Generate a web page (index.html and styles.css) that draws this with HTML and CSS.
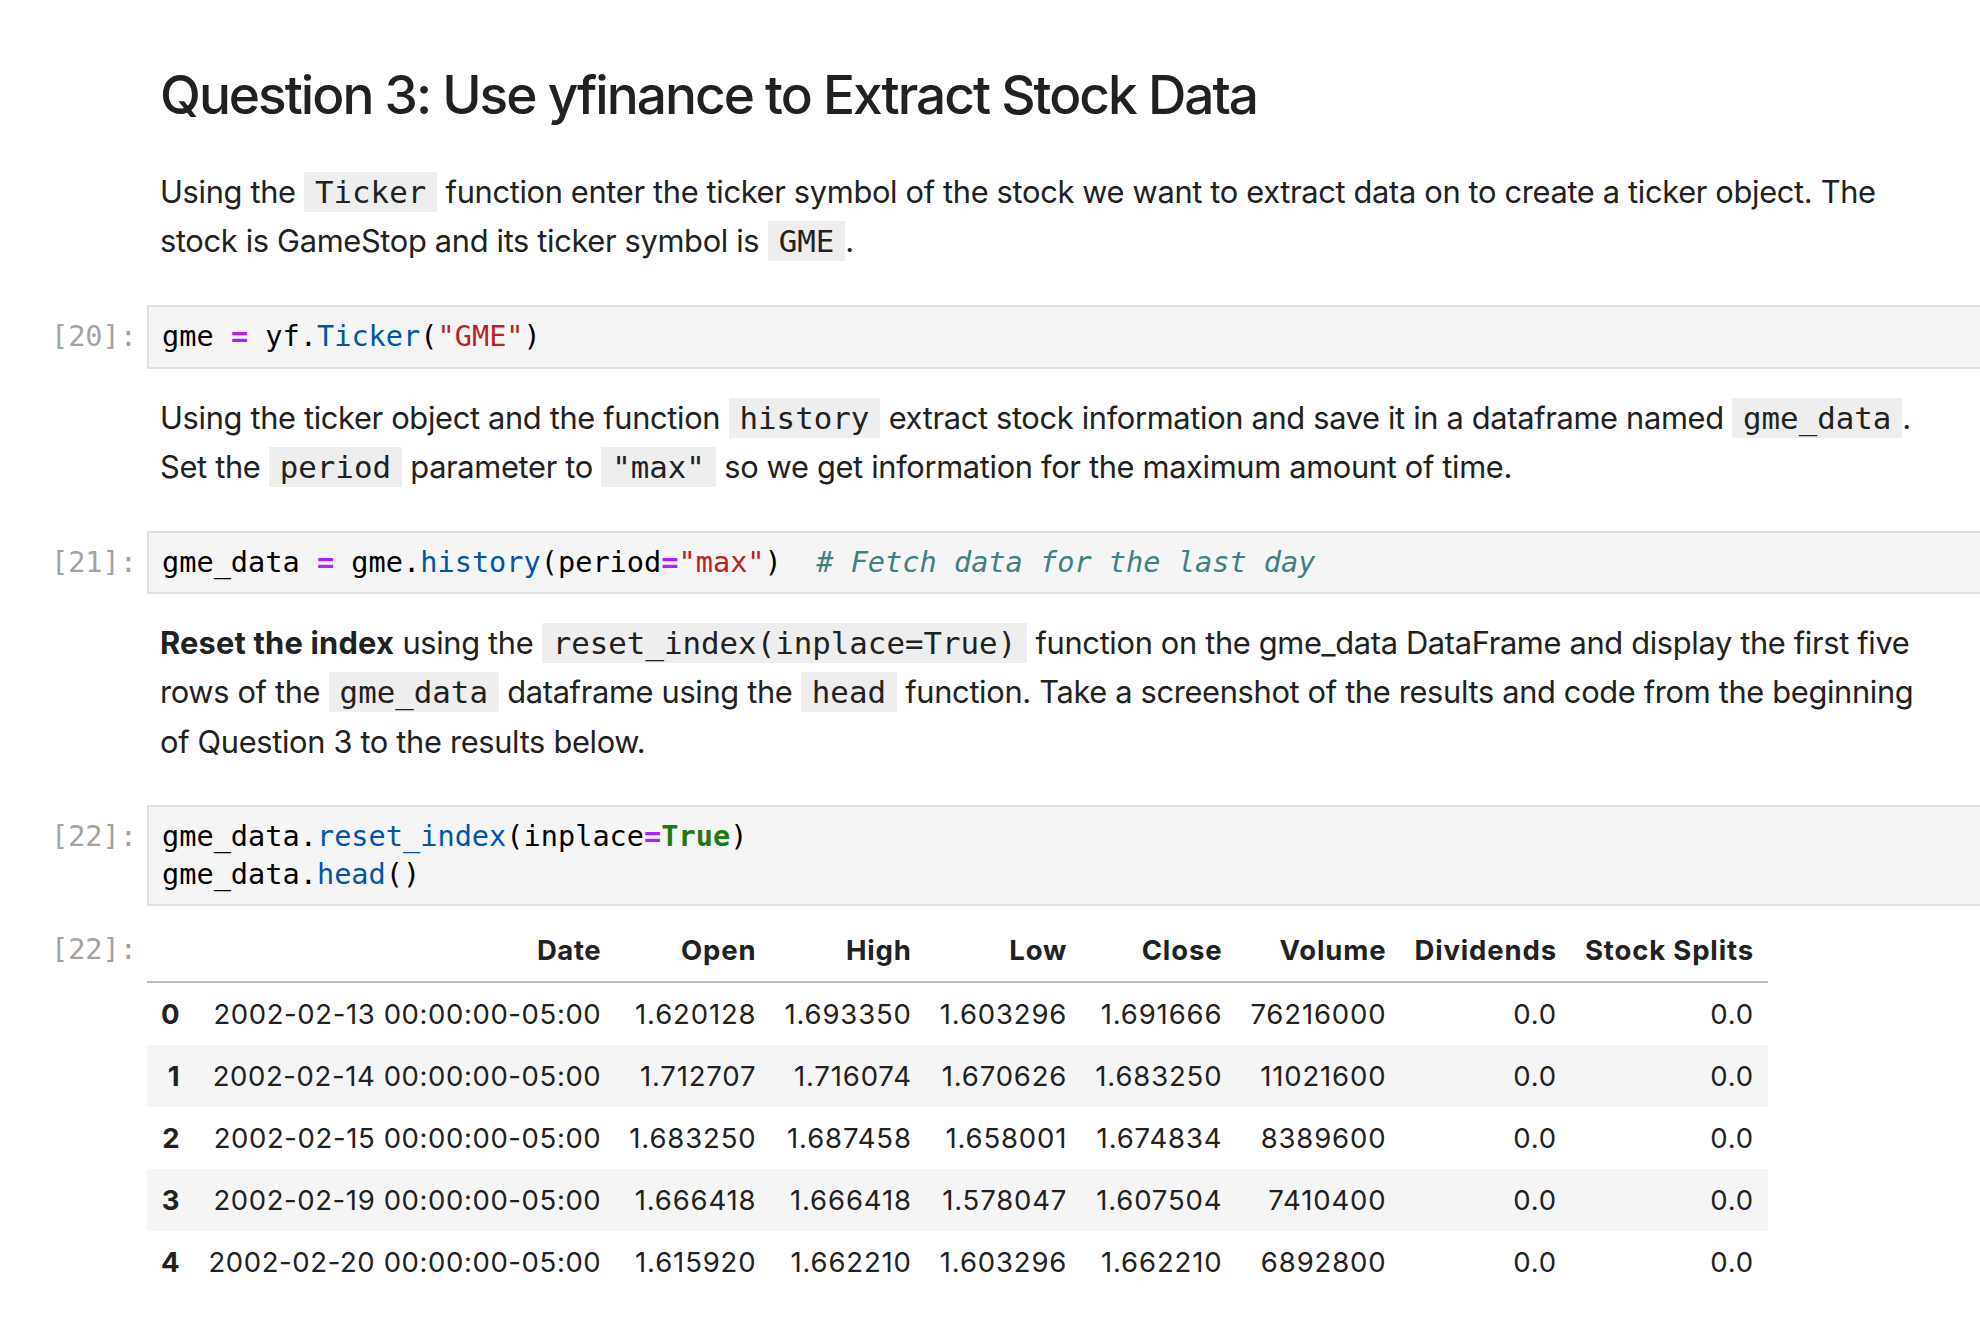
FILE: index.html
```html
<!DOCTYPE html>
<html lang="en">
<head>
<meta charset="utf-8">
<title>Question 3: Use yfinance to Extract Stock Data</title>
<link rel="stylesheet" href="styles.css">
</head>
<body>
<div class="notebook">
  <div class="cell md-cell">
    <div class="prompt"></div>
    <div class="md">
      <h2>Question 3: Use yfinance to Extract Stock Data</h2>
      <p>Using the <code>Ticker</code> function enter the ticker symbol of the stock we want to extract data on to create a ticker object. The stock is GameStop and its ticker symbol is <code>GME</code>.</p>
    </div>
  </div>

  <div class="cell code-cell">
    <div class="prompt">[20]:</div>
    <div class="editor"><pre>gme <span class="o">=</span> yf.<span class="p">Ticker</span>(<span class="s">"GME"</span>)</pre></div>
  </div>

  <div class="cell md-cell">
    <div class="prompt"></div>
    <div class="md">
      <p>Using the ticker object and the function <code>history</code> extract stock information and save it in a dataframe named <code>gme_data</code>. Set the <code>period</code> parameter to <code>"max"</code> so we get information for the maximum amount of time.</p>
    </div>
  </div>

  <div class="cell code-cell">
    <div class="prompt">[21]:</div>
    <div class="editor"><pre>gme_data <span class="o">=</span> gme.<span class="p">history</span>(period<span class="o">=</span><span class="s">"max"</span>)  <span class="c"># Fetch data for the last day</span></pre></div>
  </div>

  <div class="cell md-cell">
    <div class="prompt"></div>
    <div class="md">
      <p><strong>Reset the index</strong> using the <code>reset_index(inplace=True)</code> function on the gme_data DataFrame and display the first five rows of the <code>gme_data</code> dataframe using the <code>head</code> function. Take a screenshot of the results and code from the beginning of Question 3 to the results below.</p>
    </div>
  </div>

  <div class="cell code-cell">
    <div class="prompt">[22]:</div>
    <div class="editor"><pre>gme_data.<span class="p">reset_index</span>(inplace<span class="o">=</span><span class="k">True</span>)
gme_data.<span class="p">head</span>()</pre></div>
  </div>

  <div class="cell output-cell">
    <div class="prompt out-prompt">[22]:</div>
    <div class="output">
      <table class="dataframe">
        <thead>
          <tr><th></th><th class="date">Date</th><th>Open</th><th>High</th><th>Low</th><th>Close</th><th>Volume</th><th>Dividends</th><th>Stock Splits</th></tr>
        </thead>
        <tbody>
          <tr><th>0</th><td class="date">2002-02-13 00:00:00-05:00</td><td>1.620128</td><td>1.693350</td><td>1.603296</td><td>1.691666</td><td>76216000</td><td>0.0</td><td>0.0</td></tr>
          <tr><th>1</th><td class="date">2002-02-14 00:00:00-05:00</td><td>1.712707</td><td>1.716074</td><td>1.670626</td><td>1.683250</td><td>11021600</td><td>0.0</td><td>0.0</td></tr>
          <tr><th>2</th><td class="date">2002-02-15 00:00:00-05:00</td><td>1.683250</td><td>1.687458</td><td>1.658001</td><td>1.674834</td><td>8389600</td><td>0.0</td><td>0.0</td></tr>
          <tr><th>3</th><td class="date">2002-02-19 00:00:00-05:00</td><td>1.666418</td><td>1.666418</td><td>1.578047</td><td>1.607504</td><td>7410400</td><td>0.0</td><td>0.0</td></tr>
          <tr><th>4</th><td class="date">2002-02-20 00:00:00-05:00</td><td>1.615920</td><td>1.662210</td><td>1.603296</td><td>1.662210</td><td>6892800</td><td>0.0</td><td>0.0</td></tr>
        </tbody>
      </table>
    </div>
  </div>
</div>
</body>
</html>
```

FILE: styles.css
```css
html, body {
  margin: 0;
  padding: 0;
  background: #ffffff;
  overflow: hidden;
}

body {
  font-family: Inter, "Noto Sans", "Liberation Sans", sans-serif;
  color: #212121;
}

.notebook {
  padding-top: 63px;
}

.cell {
  display: flex;
}

.md-cell,
.output-cell {
  align-items: flex-start;
}

.code-cell {
  align-items: baseline;
}

.md-cell + .code-cell {
  margin-top: 39.4px;
}

.code-cell + .md-cell {
  margin-top: 24px;
}

.code-cell + .output-cell {
  margin-top: 12.7px;
}

.prompt {
  flex: 0 0 147px;
  box-sizing: border-box;
  padding-right: 10px;
  text-align: right;
  font-family: "DejaVu Sans Mono", "Liberation Mono", monospace;
  font-size: 28.6px;
  line-height: 37.4px;
  color: #a3a3a3;
}

.out-prompt {
  padding-top: 11.8px;
}

.md {
  flex: 1;
  min-width: 0;
  padding: 0 52px 0 13px;
}

.md h2 {
  margin: 0;
  font-size: 53.2px;
  line-height: 1.2;
  font-weight: 500;
  letter-spacing: -2px;
  color: #212121;
}

.md p {
  margin: 0;
  font-size: 30.8px;
  line-height: 49.3px;
  letter-spacing: -0.33px;
}

.md h2 + p {
  margin-top: 40.3px;
}

.md strong {
  font-weight: 700;
  letter-spacing: 0.2px;
}

.md code {
  font-family: "DejaVu Sans Mono", "Liberation Mono", monospace;
  font-size: 30.8px;
  line-height: 1;
  letter-spacing: 0;
  background: #eeeeee;
  padding: 2px 11px;
  color: #212121;
}

.editor {
  flex: 1;
  min-width: 0;
  background: #f5f5f5;
  border: 2px solid #e0e0e0;
  border-right: 0;
  padding: 11px 13px;
}

.editor pre {
  margin: 0;
  font-family: "DejaVu Sans Mono", "Liberation Mono", monospace;
  font-size: 28.6px;
  line-height: 37.4px;
  color: #000000;
  white-space: pre;
}

.editor .o {
  color: #aa22ff;
  font-weight: 700;
}

.editor .p {
  color: #0055aa;
}

.editor .s {
  color: #ba2121;
}

.editor .c {
  color: #408080;
  font-style: italic;
}

.editor .k {
  color: #1f7a12;
  font-weight: 700;
}

.output {
  flex: 1;
  min-width: 0;
}

.dataframe {
  border-collapse: collapse;
  border-spacing: 0;
  font-size: 27.5px;
  letter-spacing: 0.85px;
  color: #212121;
}

.dataframe thead {
  border-bottom: 2px solid #bdbdbd;
}

.dataframe th,
.dataframe td {
  padding: 13px 14px;
  line-height: 36px;
  text-align: right;
  white-space: nowrap;
  vertical-align: middle;
}

.dataframe .date {
  letter-spacing: 0.6px;
}

.dataframe th {
  font-weight: 700;
}

.dataframe tbody tr:nth-child(even) {
  background: #f5f5f5;
}
```
